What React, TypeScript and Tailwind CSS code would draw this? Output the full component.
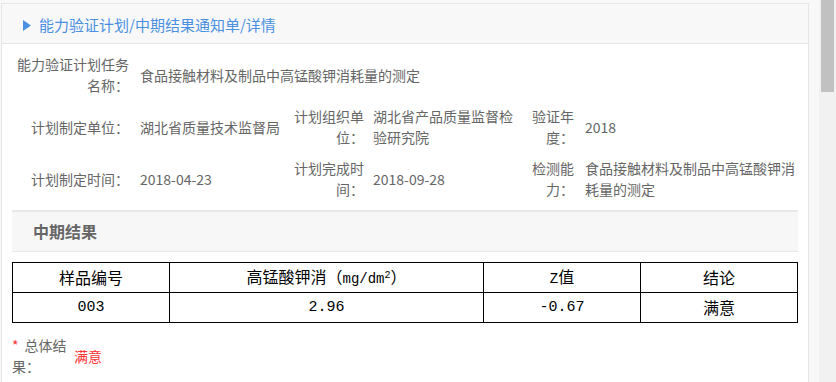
import React from 'react';

const rows = [
  {
    cells: [
      { label: '计划制定单位：', value: '湖北省质量技术监督局' },
      { label: '计划组织单位：', value: '湖北省产品质量监督检验研究院' },
      { label: '验证年度：', value: '2018' },
    ],
  },
  {
    cells: [
      { label: '计划制定时间：', value: '2018-04-23' },
      { label: '计划完成时间：', value: '2018-09-28' },
      { label: '检测能力：', value: '食品接触材料及制品中高锰酸钾消耗量的测定' },
    ],
  },
];

const InfoRow: React.FC<{ cells: { label: string; value: string }[] }> = ({ cells }) => (
  <div className="mt-[10px] flex h-[42px] items-center">
    <div className="w-[117px] text-right">{cells[0].label}</div>
    <div className="ml-[11px] w-[148px]">{cells[0].value}</div>
    <div className="w-[76px] text-right">{cells[1].label}</div>
    <div className="ml-[9px] w-[146px]">{cells[1].value}</div>
    <div className="w-[55px] text-right">{cells[2].label}</div>
    <div className="ml-[11px] w-[212px]">{cells[2].value}</div>
  </div>
);

export default function App() {
  return (
    <div className="flex h-[382px] w-[836px] overflow-hidden bg-[#f8f8f8] font-['Noto_Sans_CJK_SC',sans-serif]">
      <div className="flex-1 pl-[1px] pt-[3px]">
        <div className="w-[808px] border border-[#e6e6e6] bg-white pb-10">
          {/* 顶部面包屑 */}
          <div className="flex h-[40px] items-center border-b border-[#e6e6e6] bg-[#f8f8f8] pl-[21px] pt-[4px] text-[15px] text-[#4a90e2]">
            <svg width="8" height="11" viewBox="0 0 8 11" className="mr-[8px]">
              <polygon points="0,0 8,5.5 0,11" fill="#4a90e2" />
            </svg>
            <span>能力验证计划/中期结果通知单/详情</span>
          </div>

          <div className="px-[10px] text-[14px] leading-[21px] text-[#666]">
            <div className="flex h-[42px] items-center mt-[10px]">
              <div className="w-[117px] text-right">能力验证计划任务名称：</div>
              <div className="ml-[11px]">食品接触材料及制品中高锰酸钾消耗量的测定</div>
            </div>
            {rows.map((r, i) => (
              <InfoRow key={i} cells={r.cells} />
            ))}

            <div className="mt-[10px] flex h-[42px] items-center border-t-2 border-b border-[#e8e8e8] bg-[#f7f7f7] pl-[21px] text-[16px] font-bold text-[#666]">
              中期结果
            </div>

            <table className="mt-[10px] w-full border-collapse border border-black text-[16px] text-black">
              <thead>
                <tr className="h-[30px]">
                  <td className="w-[20%] border border-black p-0 text-center">样品编号</td>
                  <td className="w-[40%] border border-black p-0 text-center">
                    高锰酸钾消（<span className="font-['Liberation_Mono',monospace] text-[14px]">mg/dm<sup className="text-[10px]">2</sup></span>）
                  </td>
                  <td className="w-[20%] border border-black p-0 text-center">
                    <span className="font-['Liberation_Mono',monospace] text-[14px]">Z</span>值
                  </td>
                  <td className="w-[20%] border border-black p-0 text-center">结论</td>
                </tr>
              </thead>
              <tbody className="font-['Liberation_Mono','Noto_Sans_CJK_SC',monospace]">
                <tr className="h-[30px]">
                  <td className="border border-black p-0 text-center text-[15px]">003</td>
                  <td className="border border-black p-0 text-center text-[15px]">2.96</td>
                  <td className="border border-black p-0 text-center text-[15px]">-0.67</td>
                  <td className="border border-black p-0 text-center font-['Noto_Sans_CJK_SC',sans-serif]">满意</td>
                </tr>
              </tbody>
            </table>

            <div className="mt-[12px] flex items-center">
              <div className="w-[56px]">
                <div className="flex">
                  <span className="mr-[6px] text-[#f33]">*</span>
                  <span>总体结</span>
                </div>
                <div>果：</div>
              </div>
              <div className="ml-[6px] text-[#f33]">满意</div>
            </div>
          </div>
        </div>
      </div>
      {/* 滚动条 */}
      <div className="w-[17px] bg-[#f1f1f1]">
        <div className="ml-[2px] h-[92px] w-[13px] bg-[#c1c1c1]" />
      </div>
    </div>
  );
}
